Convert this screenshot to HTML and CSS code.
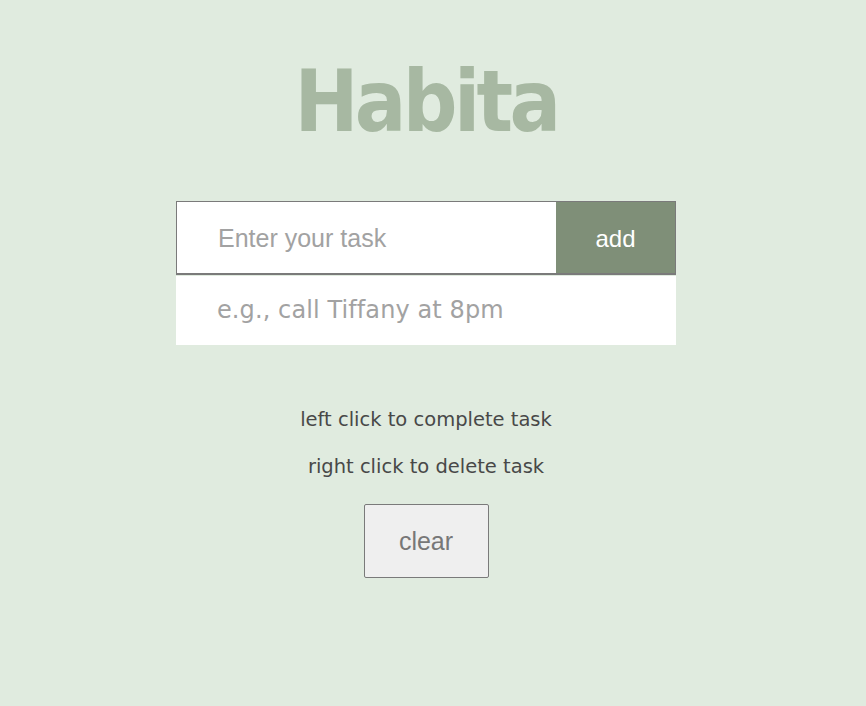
FILE: index.html
```html
<!DOCTYPE html>
<html>
<head>
<meta charset="utf-8">
<link rel="stylesheet" href="styles.css">
<title>Habita</title>
</head>
<body>
<main class="app">
  <h1 class="title">Habita</h1>
  <div class="todo">
    <form class="entry">
      <input class="task-input" type="text" placeholder="Enter your task">
      <button class="add-btn" type="button">add</button>
    </form>
    <ul class="tasks">
      <li class="task">e.g., call Tiffany at 8pm</li>
    </ul>
  </div>
  <p class="hint hint-first">left click to complete task</p>
  <p class="hint">right click to delete task</p>
  <button class="clear-btn" type="button">clear</button>
</main>
</body>
</html>
```

FILE: styles.css
```css
html, body {
  margin: 0;
  padding: 0;
  background: #e0ebdf;
}
.app {
  display: flex;
  flex-direction: column;
  align-items: center;
  padding-right: 14px;
  font-family: "DejaVu Sans", sans-serif;
}
.title {
  margin: 52px 0 0 0;
  font-family: "DejaVu Sans Condensed", "DejaVu Sans", sans-serif;
  font-weight: bold;
  font-size: 85px;
  line-height: 100px;
  color: #a7b8a2;
  letter-spacing: -3.6px;
  padding-left: 0;
}
.todo {
  width: 500px;
  margin-top: 49px;
}
.entry {
  display: flex;
  margin: 0;
  height: 74px;
  border: 1px solid #7a7a7a;
  border-bottom-width: 2px;
  box-sizing: border-box;
}
.task-input {
  flex: 1;
  min-width: 0;
  border: none;
  outline: none;
  padding: 2px 0 0 41px;
  margin: 0;
  font-family: "Liberation Sans", Arial, sans-serif;
  font-size: 25px;
  background: #fff;
  color: #333;
}
.task-input::placeholder {
  color: #a2a2a2;
}
.add-btn {
  width: 119px;
  border: none;
  margin: 0;
  background: #7f8f78;
  color: #fff;
  font-family: "Liberation Sans", Arial, sans-serif;
  font-size: 24px;
  padding: 2px 0 0 0;
}
.tasks {
  list-style: none;
  margin: 1px 0 0 0;
  padding: 0;
}
.task {
  background: #fff;
  height: 69px;
  line-height: 69px;
  padding-left: 41px;
  font-size: 24px;
  color: #a2a2a2;
  letter-spacing: 0.1px;
}
.hint {
  margin: 0;
  font-size: 19.5px;
  color: #484848;
  line-height: 24px;
}
.hint-first {
  margin-top: 63px;
}
.hint + .hint {
  margin-top: 23px;
}
.clear-btn {
  margin-top: 25px;
  width: 125px;
  height: 74px;
  background: #efefef;
  border: 1px solid #7a7a7a;
  border-radius: 2px;
  color: #777;
  font-family: "Liberation Sans", Arial, sans-serif;
  font-size: 25px;
  padding: 0;
}
```
